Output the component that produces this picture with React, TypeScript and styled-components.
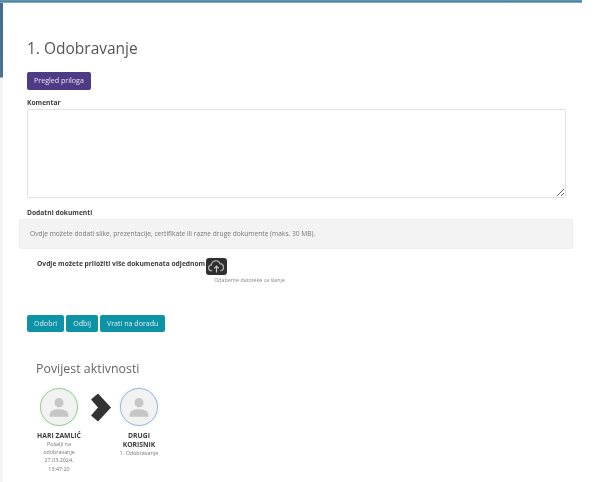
import React from "react";
import styled, { createGlobalStyle } from "styled-components";

const GlobalStyle = createGlobalStyle`
  html, body {
    margin: 0;
    padding: 0;
    background: #fff;
    font-family: "Open Sans", "Liberation Sans", sans-serif;
  }
`;

const Page = styled.div`
  width: 606px;
  height: 482px;
  overflow: hidden;
  display: flex;
  background: #fff;
  filter: blur(0.4px);
`;

const Shell = styled.div`
  width: 582px;
  height: 482px;
  display: flex;
  flex-direction: column;
`;

const TopBar = styled.div`
  height: 3px;
  flex: none;
  background: linear-gradient(#6f9db6 0, #3f7c9c 66%, #c4dbe6 100%);
`;

const Body = styled.div`
  flex: 1;
  display: flex;
  min-height: 0;
`;

const SideStrip = styled.div`
  width: 3px;
  flex: none;
  background: linear-gradient(#3f6f90 0, #4a7396 74px, #f3f3f3 75px);
`;

const Content = styled.main`
  flex: 1;
  padding: 34px 16px 0 16px;
  min-width: 0;
`;

const Inset = styled.div`
  padding: 0 8px;
`;

const Title = styled.h1`
  margin: 0 0 13px;
  font-size: 15.5px;
  line-height: 22px;
  font-weight: 400;
  color: #555;
`;

const Button = styled.button<{ $tone: "purple" | "teal" }>`
  display: block;
  height: 17.5px;
  padding: 0 7px;
  border: 0;
  border-radius: 2px;
  font-family: inherit;
  font-size: 7.1px;
  line-height: 17px;
  color: #e8e8f0;
  background: ${(p) => (p.$tone === "purple" ? "#4f3a86" : "#0c93a6")};
`;

const Label = styled.label`
  display: block;
  font-size: 6.7px;
  line-height: 9px;
  font-weight: 700;
  color: #3c3c3c;
`;

const CommentLabel = styled(Label)`
  margin: 8px 0 2px;
`;

const Comment = styled.textarea`
  display: block;
  box-sizing: border-box;
  width: 539px;
  height: 89px;
  border: 1px solid #e2e2e2;
  border-radius: 2px;
  background: #fff;
  outline: 0;
`;

const DocsLabel = styled(Label)`
  margin: 10px 0 2px;
`;

const Notice = styled.div`
  box-sizing: border-box;
  width: 554px;
  height: 30px;
  padding: 0 10px;
  display: flex;
  align-items: center;
  border: 1px solid #efefef;
  border-radius: 2px;
  background: #f3f3f3;
  font-size: 6.65px;
  color: #777;
`;

const Upload = styled.div`
  margin: 9px 0 0 18px;
  display: flex;
  align-items: flex-start;
`;

const UploadText = styled.span`
  font-size: 6.7px;
  line-height: 12px;
  font-weight: 700;
  color: #3c3c3c;
  white-space: nowrap;
`;

const UploadColumn = styled.div`
  display: flex;
  flex-direction: column;
  margin-left: 1px;
`;

const CloudButton = styled.div`
  width: 21px;
  height: 17px;
  border-radius: 3px;
  background: #2f2f2f;
  display: flex;
  align-items: center;
  justify-content: center;
`;

const UploadHint = styled.span`
  margin: 2px 0 0 8px;
  font-size: 5.3px;
  line-height: 7px;
  color: #888;
  white-space: nowrap;
`;

const Actions = styled.div`
  margin: 31px 0 0 8px;
  display: flex;
  gap: 2px;
`;

const History = styled.section`
  margin: 28px 0 0 15px;
`;

const HistoryTitle = styled.h2`
  margin: 0 0 10px 2px;
  font-size: 12.4px;
  line-height: 18px;
  font-weight: 400;
  color: #666;
`;

const Timeline = styled.div`
  display: flex;
  align-items: flex-start;
`;

const Person = styled.div`
  width: 50px;
  display: flex;
  flex-direction: column;
  align-items: center;
  text-align: center;
`;

const Avatar = styled.div<{ $ring: string; $glow: string }>`
  box-sizing: border-box;
  width: 38px;
  height: 38px;
  border-radius: 50%;
  border: 1.7px solid ${(p) => p.$ring};
  box-shadow: 0 0 3px ${(p) => p.$glow};
  background: #f2f2f2;
  display: flex;
  align-items: center;
  justify-content: center;
`;

const PersonName = styled.div`
  margin-top: 5px;
  font-size: 6.8px;
  line-height: 9px;
  font-weight: 700;
  color: #3c3c3c;
  white-space: nowrap;
`;

const PersonNote = styled.div`
  font-size: 5.4px;
  line-height: 8.2px;
  color: #777;
  white-space: nowrap;
`;

const Chevron = styled.svg`
  width: 20px;
  height: 29px;
  margin: 5px 3px 0 7px;
  flex: none;
`;

function UserGlyph() {
  return (
    <svg width="24" height="24" viewBox="0 0 22 22" aria-hidden="true">
      <circle cx="11" cy="7" r="4.2" fill="#c6c6c6" />
      <path d="M2.5 20v-2.4C2.5 14.6 6.4 13 11 13s8.5 1.6 8.5 4.6V20z" fill="#c6c6c6" />
    </svg>
  );
}

export default function App() {
  return (
    <Page>
      <GlobalStyle />
      <Shell>
        <TopBar />
        <Body>
          <SideStrip />
          <Content>
            <Inset>
              <Title>1. Odobravanje</Title>
              <Button $tone="purple">Pregled priloga</Button>
              <CommentLabel>Komentar</CommentLabel>
              <Comment />
              <DocsLabel>Dodatni dokumenti</DocsLabel>
            </Inset>
            <Notice>
              Ovdje možete dodati slike, prezentacije, certifikate ili razne druge dokumente (maks. 30 MB).
            </Notice>
            <Upload>
              <UploadText>Ovdje možete priložiti više dokumenata odjednom</UploadText>
              <UploadColumn>
                <CloudButton>
                  <svg width="17" height="14" viewBox="0 0 16 13" aria-hidden="true">
                    <path
                      d="M4 11H3.5A2.8 2.8 0 0 1 3.2 5.4 4.2 4.2 0 0 1 11.3 4.3 3.4 3.4 0 0 1 12 11h-0.5"
                      fill="none"
                      stroke="#b5b5b5"
                      strokeWidth="1.1"
                    />
                    <path d="M8 12.5V6.8M5.8 8.8 8 6.6l2.2 2.2" fill="none" stroke="#c8c8c8" strokeWidth="1.1" />
                  </svg>
                </CloudButton>
                <UploadHint>Odaberite datoteke za slanje</UploadHint>
              </UploadColumn>
            </Upload>
            <Actions>
              <Button $tone="teal">Odobri</Button>
              <Button $tone="teal">Odbij</Button>
              <Button $tone="teal">Vrati na doradu</Button>
            </Actions>
            <History>
              <HistoryTitle>Povijest aktivnosti</HistoryTitle>
              <Timeline>
                <Person>
                  <Avatar $ring="#93d193" $glow="#d6efd6">
                    <UserGlyph />
                  </Avatar>
                  <PersonName>HARI ZAMLIĆ</PersonName>
                  <PersonNote>
                    Pošalji na
                    <br />
                    odobravanje
                    <br />
                    27.03.2024.
                    <br />
                    13:47:20
                  </PersonNote>
                </Person>
                <Chevron viewBox="0 0 20 28" aria-hidden="true">
                  <path d="M0 6 7 0l13 14L7 28l-7-6 7-8z" fill="#333" />
                </Chevron>
                <Person>
                  <Avatar $ring="#97badf" $glow="#d6e5f4">
                    <UserGlyph />
                  </Avatar>
                  <PersonName>
                    DRUGI
                    <br />
                    KORISNIK
                  </PersonName>
                  <PersonNote>1. Odobravanje</PersonNote>
                </Person>
              </Timeline>
            </History>
          </Content>
        </Body>
      </Shell>
    </Page>
  );
}
